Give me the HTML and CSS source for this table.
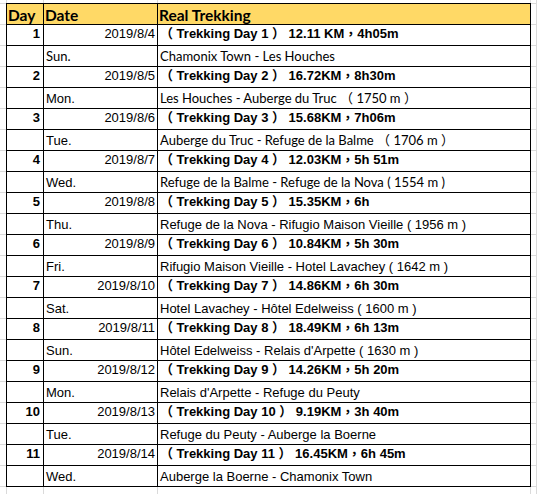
FILE: index.html
```html
<!DOCTYPE html>
<html lang="zh-TW">
<head>
<meta charset="utf-8">
<link rel="stylesheet" href="styles.css">
</head>
<body>
<table class="sheet">
  <colgroup><col class="c-day"><col class="c-date"><col class="c-trek"></colgroup>
  <tr class="head"><td class="cal">Day</td><td class="cal">Date</td><td class="cal">Real Trekking</td></tr>

  <tr class="trek"><td class="num">1</td><td class="date">2019/8/4</td><td class="bold">（ Trekking Day 1 ） 12.11 KM，4h05m</td></tr>
  <tr class="sub"><td></td><td class="cal">Sun.</td><td class="cal">Chamonix Town - Les Houches</td></tr>

  <tr class="trek"><td class="num">2</td><td class="date">2019/8/5</td><td class="bold">（ Trekking Day 2 ） 16.72KM，8h30m</td></tr>
  <tr class="sub"><td></td><td class="ari">Mon.</td><td class="cal">Les Houches - Auberge du Truc （ 1750 m ）</td></tr>

  <tr class="trek"><td class="num">3</td><td class="date">2019/8/6</td><td class="bold">（ Trekking Day 3 ） 15.68KM，7h06m</td></tr>
  <tr class="sub"><td></td><td class="ari">Tue.</td><td class="cal">Auberge du Truc - Refuge de la Balme （ 1706 m ）</td></tr>

  <tr class="trek"><td class="num">4</td><td class="date">2019/8/7</td><td class="bold">（ Trekking Day 4 ） 12.03KM，5h 51m</td></tr>
  <tr class="sub"><td></td><td class="ari">Wed.</td><td class="cal">Refuge de la Balme - Refuge de la Nova ( 1554 m )</td></tr>

  <tr class="trek"><td class="num">5</td><td class="date">2019/8/8</td><td class="bold">（ Trekking Day 5 ） 15.35KM，6h</td></tr>
  <tr class="sub"><td></td><td class="ari">Thu.</td><td class="ari">Refuge de la Nova - Rifugio Maison Vieille ( 1956 m )</td></tr>

  <tr class="trek"><td class="num">6</td><td class="date">2019/8/9</td><td class="bold">（ Trekking Day 6 ） 10.84KM，5h 30m</td></tr>
  <tr class="sub"><td></td><td class="ari">Fri.</td><td class="ari">Rifugio Maison Vieille - Hotel Lavachey ( 1642 m )</td></tr>

  <tr class="trek"><td class="num">7</td><td class="date">2019/8/10</td><td class="bold">（ Trekking Day 7 ） 14.86KM，6h 30m</td></tr>
  <tr class="sub"><td></td><td class="ari">Sat.</td><td class="ari">Hotel Lavachey - Hôtel Edelweiss ( 1600 m )</td></tr>

  <tr class="trek"><td class="num">8</td><td class="date">2019/8/11</td><td class="bold">（ Trekking Day 8 ） 18.49KM，6h 13m</td></tr>
  <tr class="sub"><td></td><td class="ari">Sun.</td><td class="ari">Hôtel Edelweiss - Relais d'Arpette ( 1630 m )</td></tr>

  <tr class="trek"><td class="num">9</td><td class="date">2019/8/12</td><td class="bold">（ Trekking Day 9 ） 14.26KM，5h 20m</td></tr>
  <tr class="sub"><td></td><td class="ari">Mon.</td><td class="ari">Relais d'Arpette - Refuge du Peuty</td></tr>

  <tr class="trek"><td class="num">10</td><td class="date">2019/8/13</td><td class="bold">（ Trekking Day 10 ） 9.19KM，3h 40m</td></tr>
  <tr class="sub"><td></td><td class="ari">Tue.</td><td class="ari">Refuge du Peuty - Auberge la Boerne</td></tr>

  <tr class="trek"><td class="num">11</td><td class="date">2019/8/14</td><td class="bold">（ Trekking Day 11 ） 16.45KM，6h 45m</td></tr>
  <tr class="sub"><td></td><td class="ari">Wed.</td><td class="ari">Auberge la Boerne - Chamonix Town</td></tr>
</table>
</body>
</html>
```

FILE: styles.css
```css
html, body {
  margin: 0;
  padding: 0;
}
body {
  background-color: #fff;
  background-image:
    linear-gradient(#dadada, #dadada),
    linear-gradient(#dadada, #dadada),
    linear-gradient(#dadada, #dadada),
    linear-gradient(#dadada, #dadada),
    linear-gradient(#dadada, #dadada),
    repeating-linear-gradient(to bottom, #dadada 0, #dadada 1px, transparent 1px, transparent 21px);
  background-size: 1px 100%, 1px 100%, 1px 100%, 1px 100%, 1px 100%, 100% 100%;
  background-position: 6px 0, 43px 0, 157px 0, 530px 0, 536px 0, 0 3px;
  background-repeat: no-repeat, no-repeat, no-repeat, no-repeat, no-repeat, repeat;
  min-height: 494px;
  padding: 3px 0 0 6px;
  box-sizing: border-box;
  font-family: "Liberation Sans", Arial, "Noto Sans CJK TC", sans-serif;
  color: #000;
}
.sheet {
  border-collapse: collapse;
  table-layout: fixed;
  width: 525px;
  background: #fff;
}
.c-day { width: 37px; }
.c-date { width: 114px; }
.c-trek { width: 373px; }
.sheet td {
  border: 1px solid #000;
  height: 21px;
  padding: 0 2px 3px 2px;
  box-sizing: border-box;
  vertical-align: bottom;
  white-space: nowrap;
  overflow: hidden;
  font-size: 13px;
  line-height: 15px;
}
.head td {
  background: #ffd966;
  font-weight: bold;
  padding: 0 2px 1px 1px;
}
.cal {
  font-family: Lato, "Noto Sans CJK TC", sans-serif;
  font-size: 16px;
}
.head .cal { font-size: 15.5px; }
.ari {
  font-family: "Liberation Sans", Arial, "Noto Sans CJK TC", sans-serif;
  font-size: 13px;
}
.sub td { padding-bottom: 2px; }
.trek td { padding-bottom: 4px; }
.num {
  text-align: right;
  font-weight: bold;
  padding-right: 3px !important;
}
.date {
  text-align: right;
}
.bold {
  font-weight: bold;
  font-family: "Liberation Sans", Arial, "Noto Sans CJK TC", sans-serif;
}
```
